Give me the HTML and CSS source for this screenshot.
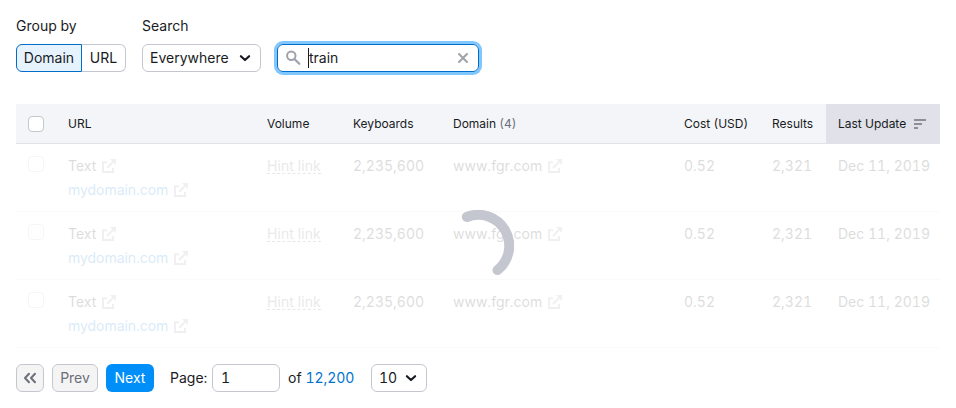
FILE: index.html
```html
<!DOCTYPE html>
<html lang="en">
<head>
<meta charset="utf-8">
<title>Domains</title>
<link rel="stylesheet" href="styles.css">
</head>
<body>
<svg class="defs" width="0" height="0" aria-hidden="true">
  <symbol id="ext" viewBox="0 0 14 14"><path d="M5 3.2H1V13h10V9M12.6 1.4 5 9" fill="none" stroke="currentColor" stroke-width="2"/><path d="M8 0h6v6l-2-2-2-2z" fill="currentColor"/></symbol>
  <symbol id="chev" viewBox="0 0 12 8"><path d="M1.9 2.2 6 6l4.1-3.8" fill="none" stroke="currentColor" stroke-width="2.2" stroke-linecap="round" stroke-linejoin="round"/></symbol>
</svg>
<div class="filters">
  <div class="field">
    <span class="label">Group by</span>
    <div class="pills"><button class="pill active">Domain</button><button class="pill">URL</button></div>
  </div>
  <div class="field">
    <span class="label">Search</span>
    <button class="select everywhere">Everywhere<svg class="chev"><use href="#chev"/></svg></button>
  </div>
  <div class="search">
    <svg class="magnifier" viewBox="0 0 16 16"><circle cx="5.3" cy="5.8" r="4.2" fill="none" stroke="currentColor" stroke-width="2"/><path d="m8.7 9.2 4.6 4.6" stroke="currentColor" stroke-width="2.2" stroke-linecap="round"/></svg>
    <span class="caret"></span><span class="query">train</span>
    <svg class="clear" viewBox="0 0 12 12"><path d="m2 2 8 8M10 2l-8 8" stroke="currentColor" stroke-width="2" stroke-linecap="round"/></svg>
  </div>
</div>
<div class="table">
  <div class="row head">
    <div><span class="check"></span></div><div>URL</div><div>Volume</div><div>Keyboards</div><div>Domain <span class="count">(4)</span></div><div>Cost (USD)</div><div>Results</div>
    <div class="sorted">Last Update<svg class="sort" viewBox="0 0 12 10"><path d="M0 1h12M0 5h8M0 9h4" stroke="currentColor" stroke-width="2"/></svg></div>
  </div>
  <div class="body">
    <div class="row"><div><span class="check"></span></div><div><p>Text<svg class="ext"><use href="#ext"/></svg></p><p><a>mydomain.com</a><svg class="ext"><use href="#ext"/></svg></p></div><div><span class="hint">Hint link</span></div><div>2,235,600</div><div>www.fgr.com<svg class="ext"><use href="#ext"/></svg></div><div>0.52</div><div>2,321</div><div>Dec 11, 2019</div></div>
    <div class="row"><div><span class="check"></span></div><div><p>Text<svg class="ext"><use href="#ext"/></svg></p><p><a>mydomain.com</a><svg class="ext"><use href="#ext"/></svg></p></div><div><span class="hint">Hint link</span></div><div>2,235,600</div><div>www.fgr.com<svg class="ext"><use href="#ext"/></svg></div><div>0.52</div><div>2,321</div><div>Dec 11, 2019</div></div>
    <div class="row"><div><span class="check"></span></div><div><p>Text<svg class="ext"><use href="#ext"/></svg></p><p><a>mydomain.com</a><svg class="ext"><use href="#ext"/></svg></p></div><div><span class="hint">Hint link</span></div><div>2,235,600</div><div>www.fgr.com<svg class="ext"><use href="#ext"/></svg></div><div>0.52</div><div>2,321</div><div>Dec 11, 2019</div></div>
  </div>
  <svg class="spinner" viewBox="-36 -36 72 72"><path d="M-11.2-29A31 31 0 0 1 19.5 24.1" fill="none" stroke="#c4c7cf" stroke-width="10" stroke-linecap="round"/></svg>
</div>
<div class="pagination">
  <button class="btn first"><svg viewBox="0 0 14 12"><path d="M6 1.8 2 6l4 4.2M12 1.8 8 6l4 4.2" fill="none" stroke="currentColor" stroke-width="2" stroke-linecap="round" stroke-linejoin="round"/></svg></button>
  <button class="btn">Prev</button>
  <button class="btn next">Next</button>
  <span class="page-label">Page:</span>
  <div class="page-input">1</div>
  <span class="of">of</span><a class="total">12,200</a>
  <button class="select size">10<svg class="chev"><use href="#chev"/></svg></button>
</div>
</body>
</html>
```
FILE: styles.css
```css
* { box-sizing: border-box; }
body {
  margin: 0;
  padding: 16px;
  background: #fff;
  color: #191b23;
  font: 14px/20px Inter, sans-serif;
  font-variant-numeric: tabular-nums;
}
p { margin: 0; }
button { font: inherit; color: inherit; margin: 0; padding: 0; background: #fff; }
svg { flex: none; display: block; }
.defs { position: absolute; }

.filters { display: flex; align-items: flex-end; gap: 16px; height: 56px; }
.field { display: flex; flex-direction: column; gap: 8px; }
.pills { display: flex; width: 110px; }
.pill {
  width: 44px;
  height: 28px;
  border: 1px solid #c4c7cf;
  border-left: 0;
  border-radius: 0 6px 6px 0;
}
.pill.active {
  width: 66px;
  border: 1px solid #006dca;
  border-radius: 6px 0 0 6px;
  background: #e6f3ff;
}
.select {
  display: flex;
  align-items: center;
  justify-content: space-between;
  height: 28px;
  padding: 0 9px 0 7px;
  border: 1px solid #c4c7cf;
  border-radius: 6px;
}
.everywhere { width: 119px; }
.chev { width: 12px; height: 8px; }
.search {
  display: flex;
  align-items: center;
  width: 202px;
  height: 28px;
  padding: 0 9px 0 8px;
  border: 1px solid #006dca;
  border-radius: 6px;
  box-shadow: 0 0 0 3px #80c7ff;
}
.magnifier { width: 16px; height: 16px; color: #a0a2ab; }
.caret { width: 1px; height: 20px; margin-left: 6px; background: #191b23; }
.query { flex: 1; }
.clear { width: 12px; height: 12px; color: #a0a2ab; }

.table { position: relative; margin-top: 32px; }
.row {
  display: grid;
  grid-template-columns: 40px 199px 86px 100px 231px 88px 66px 114px;
  height: 68px;
  border-bottom: 1px solid #e0e1e9;
}
.row > div { padding: 12px 0 0 12px; white-space: nowrap; }
.check {
  display: block;
  width: 16px;
  height: 16px;
  border: 1px solid #c4c7cf;
  border-radius: 4px;
  background: #fff;
}
.head { height: 40px; background: #f4f5f9; font-size: 12px; line-height: 16px; }
.count { color: #6c6e79; }
.head .sorted { display: flex; height: 40px; background: #e0e1e9; }
.sort { width: 12px; height: 10px; margin: 3px 0 0 8px; color: #8e8f94; }
.body { opacity: .15; }
.body .row { border-bottom-color: #e0e1e9; }
.body p { display: flex; height: 24px; }
.body a { color: #0078d8; letter-spacing: -.04px; }
.body .row > div:nth-child(5) { display: flex; }
.ext { width: 14px; height: 14px; margin: 3px 0 0 5.5px; color: #a0a2ab; }
.hint { display: inline-block; height: 18px; border-bottom: 1px dashed #6c6e79; color: #6c6e79; letter-spacing: .08px; }
.spinner { position: absolute; left: 426px; top: 106px; width: 72px; height: 72px; }

.pagination { display: flex; align-items: center; width: 411px; margin-top: 16px; }
.btn {
  width: 46px;
  height: 28px;
  margin-right: 8px;
  border: 1px solid #c4c7cf;
  border-radius: 6px;
  background: #f4f4f5;
  color: #6c6e79;
}
.first { width: 28px; padding-left: 6px; }
.first svg { width: 14px; height: 12px; }
.next { width: 48px; margin-right: 16px; border: 0; background: #008ff8; color: #fff; }
.page-label { width: 42px; }
.page-input { width: 68px; height: 28px; padding: 3px 8px; border: 1px solid #c4c7cf; border-radius: 6px; }
.of { margin-left: 8px; }
.total { margin-left: 4px; color: #0073d0; letter-spacing: -.06px; }
.size { width: 56px; margin-left: auto; }
```
